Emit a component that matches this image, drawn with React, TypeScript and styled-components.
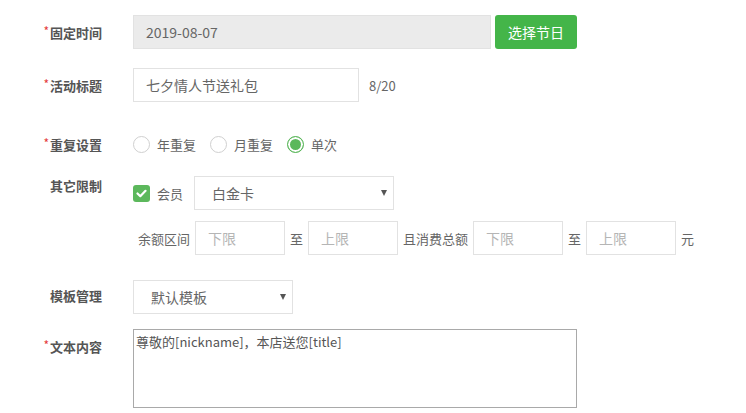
import { FC, ReactNode } from "react";
import styled, { createGlobalStyle } from "styled-components";

const GlobalStyle = createGlobalStyle`
  html, body {
    margin: 0;
    padding: 0;
    background: #fff;
  }
  body {
    font-family: "Noto Sans CJK SC", "Noto Sans", sans-serif;
    font-size: 13px;
    color: #666;
  }
`;

const green = "#44b549";

const Form = styled.div`
  display: flex;
  flex-direction: column;
  padding-top: 15px;
`;

const Row = styled.div<{ $top?: number }>`
  display: flex;
  align-items: flex-start;
  margin-top: ${({ $top }) => $top ?? 0}px;
`;

const Label = styled.div<{ $offset?: number }>`
  width: 102px;
  flex: none;
  margin-right: 31px;
  padding-top: ${({ $offset }) => $offset ?? 6}px;
  text-align: right;
  font-size: 13px;
  line-height: 20px;
  font-weight: bold;
  color: #555;
`;

const Star = styled.span`
  color: #e4393c;
  font-size: 12px;
  font-weight: normal;
  vertical-align: 2px;
  margin-right: 1px;
`;

const Controls = styled.div`
  display: flex;
  flex-direction: column;
  gap: 11px;
`;

const Line = styled.div<{ $indent?: number }>`
  display: flex;
  align-items: center;
  gap: 5px;
  padding-left: ${({ $indent }) => $indent ?? 0}px;
`;

const TextInput = styled.div<{ $width: number; $disabled?: boolean; $placeholder?: boolean }>`
  box-sizing: border-box;
  width: ${({ $width }) => $width}px;
  height: 34px;
  padding: 0 12px;
  display: flex;
  align-items: center;
  border: 1px solid #e2e2e2;
  background: ${({ $disabled }) => ($disabled ? "#ebebeb" : "#fff")};
  color: ${({ $placeholder }) => ($placeholder ? "#b5b5b5" : "#666")};
  font-size: 14px;
  white-space: nowrap;
`;

const GreenButton = styled.button`
  height: 34px;
  width: 82px;
  margin-left: -1px;
  border: none;
  border-radius: 3px;
  background: ${green};
  color: #fff;
  font-family: inherit;
  font-size: 14px;
  cursor: pointer;
`;

const Hint = styled.span`
  margin-left: 5px;
  font-size: 13px;
  color: #666;
`;

const Text = styled.span`
  font-size: 13px;
  color: #666;
  white-space: nowrap;
`;

const RadioGroup = styled.div`
  display: flex;
  align-items: center;
  height: 32px;
  gap: 14px;
`;

const RadioItem = styled.label`
  display: flex;
  align-items: center;
  gap: 7px;
  font-size: 13px;
  color: #666;
`;

const RadioDot = styled.span<{ $checked?: boolean }>`
  box-sizing: border-box;
  width: 17px;
  height: 17px;
  border-radius: 50%;
  border: 1px solid ${({ $checked }) => ($checked ? "#5cb85c" : "#d0d0d0")};
  background: ${({ $checked }) => ($checked ? "#5cb85c" : "#fff")};
  box-shadow: ${({ $checked }) => ($checked ? "inset 0 0 0 2px #fff" : "none")};
`;

const CheckBox = styled.span`
  width: 17px;
  height: 17px;
  border-radius: 3px;
  background: #5cb85c;
  display: flex;
  align-items: center;
  justify-content: center;
`;

const CheckItem = styled.label`
  display: flex;
  align-items: center;
  gap: 7px;
  margin-right: 6px;
  font-size: 13px;
  color: #666;
`;

const SelectBox = styled.div<{ $width: number; $pad: number }>`
  box-sizing: border-box;
  width: ${({ $width }) => $width}px;
  height: 34px;
  padding: 0 6px 0 ${({ $pad }) => $pad}px;
  display: flex;
  align-items: center;
  justify-content: space-between;
  border: 1px solid #e2e2e2;
  background: #fff;
  font-size: 14px;
  color: #666;
`;

const Caret = styled.span`
  width: 0;
  height: 0;
  border-left: 3.5px solid transparent;
  border-right: 3.5px solid transparent;
  border-top: 6px solid #555;
`;

const TextArea = styled.textarea`
  box-sizing: border-box;
  width: 444px;
  height: 79px;
  margin: 0;
  padding: 2px 2px;
  border: 1px solid #a9a9a9;
  resize: none;
  font-family: "Noto Sans CJK SC", "Noto Sans", sans-serif;
  font-size: 13px;
  line-height: 20px;
  color: #555;
  outline: none;
`;

const Select: FC<{ width: number; pad: number; children: ReactNode }> = ({ width, pad, children }) => (
  <SelectBox $width={width} $pad={pad}>
    <span>{children}</span>
    <Caret />
  </SelectBox>
);

const CheckMark = () => (
  <svg width="11" height="9" viewBox="0 0 11 9">
    <path d="M1.5 4.5 L4.3 7.2 L9.5 1.8" fill="none" stroke="#fff" strokeWidth="2.2" strokeLinecap="round" strokeLinejoin="round" />
  </svg>
);

export default function App() {
  return (
    <>
      <GlobalStyle />
      <Form>
        <Row>
          <Label>
            <Star>*</Star>固定时间
          </Label>
          <Line>
            <TextInput $width={358} $disabled>
              2019-08-07
            </TextInput>
            <GreenButton>选择节日</GreenButton>
          </Line>
        </Row>

        <Row $top={19}>
          <Label>
            <Star>*</Star>活动标题
          </Label>
          <Line>
            <TextInput $width={226}>七夕情人节送礼包</TextInput>
            <Hint>8/20</Hint>
          </Line>
        </Row>

        <Row $top={26}>
          <Label $offset={5}>
            <Star>*</Star>重复设置
          </Label>
          <RadioGroup>
            <RadioItem>
              <RadioDot />
              年重复
            </RadioItem>
            <RadioItem>
              <RadioDot />
              月重复
            </RadioItem>
            <RadioItem>
              <RadioDot $checked />
              单次
            </RadioItem>
          </RadioGroup>
        </Row>

        <Row $top={16}>
          <Label $offset={0}>其它限制</Label>
          <Controls>
            <Line>
              <CheckItem>
                <CheckBox>
                  <CheckMark />
                </CheckBox>
                会员
              </CheckItem>
              <Select width={200} pad={17}>
                白金卡
              </Select>
            </Line>
            <Line $indent={5}>
              <Text>余额区间</Text>
              <TextInput $width={90} $placeholder>
                下限
              </TextInput>
              <Text>至</Text>
              <TextInput $width={90} $placeholder>
                上限
              </TextInput>
              <Text>且消费总额</Text>
              <TextInput $width={90} $placeholder>
                下限
              </TextInput>
              <Text>至</Text>
              <TextInput $width={90} $placeholder>
                上限
              </TextInput>
              <Text>元</Text>
            </Line>
          </Controls>
        </Row>

        <Row $top={25}>
          <Label>模板管理</Label>
          <Select width={160} pad={17}>
            默认模板
          </Select>
        </Row>

        <Row $top={15}>
          <Label>
            <Star>*</Star>文本内容
          </Label>
          <TextArea readOnly defaultValue="尊敬的[nickname]，本店送您[title]" />
        </Row>
      </Form>
    </>
  );
}
